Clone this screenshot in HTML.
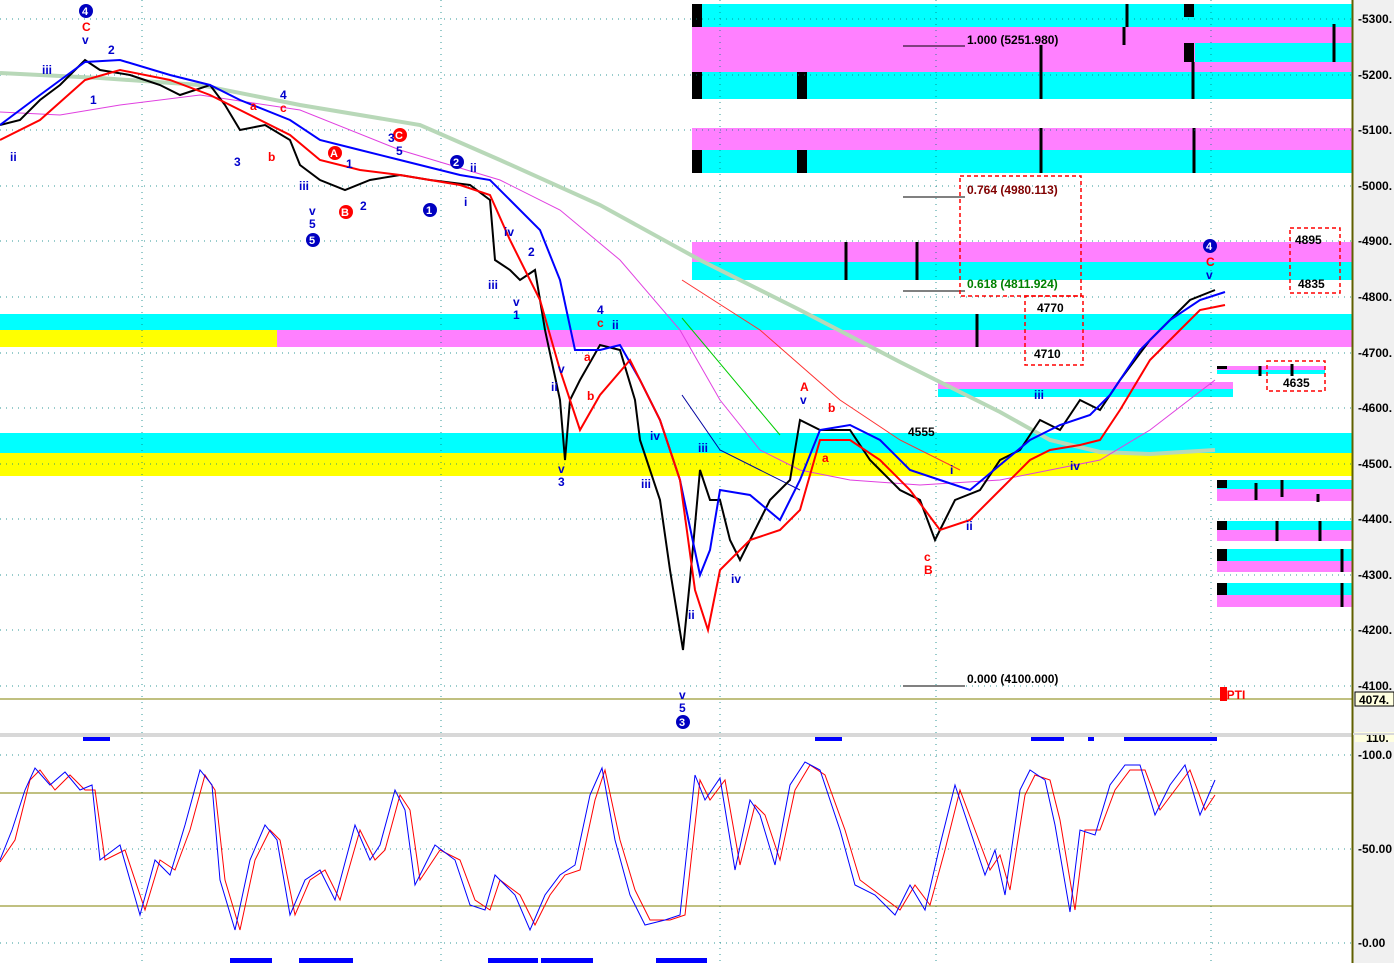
<!DOCTYPE html>
<html><head><meta charset="utf-8"><style>
html,body{margin:0;padding:0;background:#fff;width:1394px;height:963px;overflow:hidden}
svg{display:block}
text{font-family:"Liberation Sans",sans-serif}
</style></head><body>
<svg width="1394" height="963" viewBox="0 0 1394 963" xmlns="http://www.w3.org/2000/svg">
<rect width="1394" height="963" fill="#fff"/>
<!-- bands -->
<g>
<rect x="692" y="4" width="660" height="23" fill="#00ffff"/>
<rect x="692" y="27" width="660" height="45" fill="#ff80ff"/>
<rect x="1195" y="43" width="157" height="19" fill="#00ffff"/>
<rect x="692" y="72" width="660" height="27" fill="#00ffff"/>
<rect x="692" y="128" width="660" height="22" fill="#ff80ff"/>
<rect x="692" y="150" width="660" height="23" fill="#00ffff"/>
<rect x="692" y="242" width="660" height="20" fill="#ff80ff"/>
<rect x="692" y="262" width="660" height="18" fill="#00ffff"/>
<rect x="0" y="314" width="1352" height="16" fill="#00ffff"/>
<rect x="0" y="330" width="1352" height="17" fill="#ff80ff"/>
<rect x="0" y="330" width="277" height="17" fill="#ffff00"/>
<rect x="1217" y="366" width="108" height="4" fill="#ff80ff"/>
<rect x="1217" y="370" width="108" height="4" fill="#00ffff"/>
<rect x="938" y="382" width="295" height="7" fill="#ff80ff"/>
<rect x="938" y="389" width="295" height="8" fill="#00ffff"/>
<rect x="0" y="433" width="1352" height="20" fill="#00ffff"/>
<rect x="0" y="453" width="1352" height="23" fill="#ffff00"/>
<rect x="1217" y="480" width="135" height="9" fill="#00ffff"/>
<rect x="1217" y="489" width="135" height="12" fill="#ff80ff"/>
<rect x="1217" y="521" width="135" height="9" fill="#00ffff"/>
<rect x="1217" y="530" width="135" height="11" fill="#ff80ff"/>
<rect x="1217" y="549" width="135" height="12" fill="#00ffff"/>
<rect x="1217" y="561" width="135" height="11" fill="#ff80ff"/>
<rect x="1217" y="583" width="135" height="12" fill="#00ffff"/>
<rect x="1217" y="595" width="135" height="12" fill="#ff80ff"/>
<g fill="#000">
<rect x="692" y="4" width="10" height="23"/><rect x="692" y="72" width="10" height="27"/><rect x="692" y="150" width="10" height="23"/>
<rect x="797" y="72" width="10" height="27"/><rect x="797" y="150" width="10" height="23"/>
<rect x="1184" y="4" width="10" height="13"/><rect x="1184" y="43" width="10" height="19"/>
<rect x="1217" y="480" width="10" height="8"/><rect x="1217" y="521" width="10" height="9"/><rect x="1217" y="549" width="10" height="12"/><rect x="1217" y="583" width="10" height="12"/>
<rect x="1217" y="366" width="10" height="3"/>
</g>
<g stroke="#000" stroke-width="3">
<line x1="1127" y1="4" x2="1127" y2="27"/><line x1="1124" y1="27" x2="1124" y2="45"/><line x1="1041" y1="45" x2="1041" y2="99"/>
<line x1="1193" y1="62" x2="1193" y2="99"/><line x1="1334" y1="24" x2="1334" y2="62"/><line x1="1041" y1="128" x2="1041" y2="173"/>
<line x1="1194" y1="128" x2="1194" y2="173"/><line x1="846" y1="242" x2="846" y2="280"/><line x1="917" y1="242" x2="917" y2="280"/>
<line x1="977" y1="314" x2="977" y2="347"/><line x1="1260" y1="366" x2="1260" y2="376"/><line x1="1292" y1="364" x2="1292" y2="376"/>
<line x1="1256" y1="483" x2="1256" y2="500"/><line x1="1282" y1="480" x2="1282" y2="497"/><line x1="1318" y1="494" x2="1318" y2="502"/>
<line x1="1277" y1="521" x2="1277" y2="541"/><line x1="1320" y1="521" x2="1320" y2="541"/><line x1="1342" y1="549" x2="1342" y2="572"/><line x1="1342" y1="583" x2="1342" y2="607"/>
</g>
</g>
<!-- grid -->
<g stroke="#008080" stroke-width="1" stroke-dasharray="1,5" opacity="0.8">
<line x1="0" y1="19" x2="1352" y2="19"/><line x1="0" y1="75" x2="1352" y2="75"/><line x1="0" y1="130" x2="1352" y2="130"/>
<line x1="0" y1="186" x2="1352" y2="186"/><line x1="0" y1="241" x2="1352" y2="241"/><line x1="0" y1="297" x2="1352" y2="297"/>
<line x1="0" y1="353" x2="1352" y2="353"/><line x1="0" y1="408" x2="1352" y2="408"/><line x1="0" y1="464" x2="1352" y2="464"/>
<line x1="0" y1="519" x2="1352" y2="519"/><line x1="0" y1="575" x2="1352" y2="575"/><line x1="0" y1="630" x2="1352" y2="630"/>
<line x1="0" y1="686" x2="1352" y2="686"/>
<line x1="0" y1="755" x2="1352" y2="755"/><line x1="0" y1="849" x2="1352" y2="849"/><line x1="0" y1="943" x2="1352" y2="943"/>
<line x1="142" y1="0" x2="142" y2="963"/><line x1="441" y1="0" x2="441" y2="963"/><line x1="720" y1="0" x2="720" y2="963"/><line x1="936" y1="0" x2="936" y2="963"/><line x1="1211" y1="0" x2="1211" y2="963"/>
</g>
<line x1="0" y1="699" x2="1352" y2="699" stroke="#808000"/>
<!-- MAs -->
<polyline fill="none" stroke="#b8d8b8" stroke-width="4" points="0,73 100,78 200,85 300,105 420,125 500,160 600,205 700,260 800,310 900,362 1000,412 1050,440 1100,452 1150,454 1215,450"/>
<polyline fill="none" stroke="#e040e0" stroke-width="1" points="0,112 60,115 120,105 200,95 300,110 400,150 500,180 560,210 620,260 680,330 720,400 760,450 800,470 850,480 920,485 1000,480 1050,470 1100,460 1150,430 1215,380"/>
<polyline fill="none" stroke="#ff3030" stroke-width="1" points="682,280 760,330 840,400 900,440 960,470"/>
<polyline fill="none" stroke="#00cc00" stroke-width="1" points="682,318 780,435"/>
<polyline fill="none" stroke="#0000a0" stroke-width="1" points="682,395 720,450 760,470 800,490"/>
<!-- price -->
<polyline fill="none" stroke="#000" stroke-width="2" points="0,125 20,120 40,100 60,85 85,60 100,70 130,75 160,85 180,95 210,85 225,105 240,130 265,125 290,140 300,165 320,180 345,190 370,180 400,175 430,180 470,185 490,200 495,260 510,270 520,280 535,270 545,330 560,400 565,460 570,400 580,380 600,345 620,350 635,400 640,440 660,500 670,570 683,650 690,580 700,470 710,500 720,500 730,540 740,560 760,520 770,500 790,480 800,420 820,430 850,430 870,460 880,470 900,490 920,500 935,540 955,500 980,490 1000,460 1020,450 1040,420 1060,430 1080,400 1100,410 1120,380 1150,340 1190,300 1215,290"/>
<polyline fill="none" stroke="#0000ff" stroke-width="2" points="0,125 40,95 85,62 120,60 170,75 210,85 240,100 290,120 320,140 360,150 400,160 460,175 490,180 510,200 540,230 560,280 575,350 600,350 620,345 640,380 660,420 680,480 700,575 710,550 720,490 750,495 780,520 800,480 820,430 850,425 880,440 910,470 940,480 970,490 1000,465 1030,440 1060,425 1090,415 1110,395 1140,350 1170,320 1200,300 1225,292"/>
<polyline fill="none" stroke="#ff0000" stroke-width="2" points="0,140 40,120 85,80 120,70 170,80 210,95 240,110 290,135 320,160 360,170 400,175 460,185 490,195 510,240 540,300 560,370 580,430 600,395 630,360 660,420 680,480 695,590 708,630 720,570 750,540 780,530 800,510 820,440 850,440 880,460 910,490 940,530 970,520 1000,490 1030,460 1050,450 1080,445 1100,440 1120,410 1150,360 1180,330 1200,310 1225,305"/>
<!-- fib labels -->
<g font-size="12" font-weight="bold">
<line x1="903" y1="46" x2="965" y2="46" stroke="#000"/><text x="967" y="44" fill="#000">1.000 (5251.980)</text>
<line x1="903" y1="197" x2="965" y2="197" stroke="#000"/><text x="967" y="194" fill="#800000">0.764 (4980.113)</text>
<line x1="903" y1="291" x2="965" y2="291" stroke="#000"/><text x="967" y="288" fill="#008000">0.618 (4811.924)</text>
<line x1="903" y1="686" x2="965" y2="686" stroke="#000"/><text x="967" y="683" fill="#000">0.000 (4100.000)</text>
<text x="1037" y="312" fill="#000">4770</text><text x="1034" y="358" fill="#000">4710</text>
<text x="1295" y="244" fill="#000">4895</text><text x="1298" y="288" fill="#000">4835</text>
<text x="1283" y="387" fill="#000">4635</text><text x="908" y="436" fill="#000">4555</text>
</g>
<g fill="none" stroke="#ff0000" stroke-width="1.5" stroke-dasharray="4,3">
<rect x="960" y="176" width="121" height="120"/><rect x="1025" y="296" width="58" height="69"/>
<rect x="1290" y="228" width="50" height="65"/><rect x="1267" y="361" width="58" height="30"/>
</g>
<!-- wave labels -->
<g font-size="12" font-weight="bold">
<circle cx="86" cy="11" r="7" fill="#0000c0"/><text x="82" y="15" fill="#fff" font-size="11">4</text>
<circle cx="313" cy="240" r="7" fill="#0000c0"/><text x="309" y="244" fill="#fff" font-size="11">5</text>
<circle cx="430" cy="210" r="7" fill="#0000c0"/><text x="426" y="214" fill="#fff" font-size="11">1</text>
<circle cx="457" cy="162" r="7" fill="#0000c0"/><text x="453" y="166" fill="#fff" font-size="11">2</text>
<circle cx="683" cy="722" r="7" fill="#0000c0"/><text x="679" y="726" fill="#fff" font-size="11">3</text>
<circle cx="1210" cy="246" r="7" fill="#0000c0"/><text x="1206" y="250" fill="#fff" font-size="11">4</text>
<circle cx="400" cy="135" r="7" fill="#ff0000"/><text x="395" y="139" fill="#fff" font-size="11">C</text>
<circle cx="335" cy="153" r="7" fill="#ff0000"/><text x="330" y="157" fill="#fff" font-size="11">A</text>
<circle cx="346" cy="212" r="7" fill="#ff0000"/><text x="341" y="216" fill="#fff" font-size="11">B</text>
<text x="82" y="31" fill="#f00">C</text><text x="82" y="44" fill="#00c">v</text>
<text x="1206" y="266" fill="#f00">C</text><text x="1206" y="279" fill="#00c">v</text>
<text x="42" y="74" fill="#00c">iii</text><text x="10" y="161" fill="#00c">ii</text><text x="108" y="54" fill="#00c">2</text><text x="90" y="104" fill="#00c">1</text>
<text x="234" y="166" fill="#00c">3</text><text x="268" y="161" fill="#f00">b</text><text x="250" y="110" fill="#f00">a</text><text x="280" y="99" fill="#00c">4</text><text x="280" y="112" fill="#f00">c</text>
<text x="299" y="190" fill="#00c">iii</text><text x="309" y="215" fill="#00c">v</text><text x="309" y="228" fill="#00c">5</text>
<text x="360" y="210" fill="#00c">2</text><text x="388" y="142" fill="#00c">3</text><text x="396" y="155" fill="#00c">5</text><text x="346" y="168" fill="#00c">1</text>
<text x="470" y="172" fill="#00c">ii</text><text x="464" y="206" fill="#00c">i</text>
<text x="504" y="236" fill="#00c">iv</text><text x="488" y="289" fill="#00c">iii</text><text x="528" y="256" fill="#00c">2</text><text x="513" y="306" fill="#00c">v</text><text x="513" y="319" fill="#00c">1</text>
<text x="558" y="473" fill="#00c">v</text><text x="558" y="486" fill="#00c">3</text><text x="551" y="391" fill="#00c">ii</text><text x="558" y="373" fill="#00c">v</text>
<text x="597" y="314" fill="#00c">4</text><text x="597" y="327" fill="#f00">c</text><text x="612" y="329" fill="#00c">ii</text><text x="584" y="361" fill="#f00">a</text><text x="587" y="400" fill="#f00">b</text>
<text x="650" y="440" fill="#00c">iv</text><text x="641" y="488" fill="#00c">iii</text><text x="698" y="452" fill="#00c">iii</text><text x="688" y="619" fill="#00c">ii</text>
<text x="679" y="699" fill="#00c">v</text><text x="679" y="712" fill="#00c">5</text><text x="731" y="583" fill="#00c">iv</text>
<text x="800" y="391" fill="#f00">A</text><text x="800" y="404" fill="#00c">v</text><text x="828" y="412" fill="#f00">b</text><text x="822" y="462" fill="#f00">a</text>
<text x="924" y="561" fill="#f00">c</text><text x="924" y="574" fill="#f00">B</text><text x="966" y="530" fill="#00c">ii</text><text x="950" y="474" fill="#00c">i</text>
<text x="1034" y="399" fill="#00c">iii</text><text x="1070" y="470" fill="#00c">iv</text>
<rect x="1220" y="687" width="7" height="14" fill="#f00"/><text x="1220" y="699" fill="#f00">5PTI</text>
</g>
<!-- separator -->
<rect x="0" y="733" width="1352" height="4" fill="#d8d8d8"/>
<g fill="#0000ff">
<rect x="83" y="737" width="27" height="4"/><rect x="815" y="737" width="27" height="4"/><rect x="1031" y="737" width="33" height="4"/><rect x="1088" y="737" width="6" height="4"/><rect x="1124" y="737" width="93" height="4"/>
<rect x="230" y="958" width="42" height="5"/><rect x="299" y="958" width="54" height="5"/><rect x="488" y="958" width="50" height="5"/><rect x="541" y="958" width="52" height="5"/><rect x="656" y="958" width="51" height="5"/>
</g>
<line x1="0" y1="793" x2="1352" y2="793" stroke="#808000"/><line x1="0" y1="906" x2="1352" y2="906" stroke="#808000"/>
<!-- oscillator -->
<polyline fill="none" stroke="#ff0000" stroke-width="1" points="0,862 15,840 30,780 40,770 55,790 70,775 85,790 95,790 105,860 125,850 145,910 160,860 175,870 190,830 205,775 215,790 225,880 240,930 255,860 270,830 280,840 295,915 310,880 325,870 340,900 360,830 375,860 385,850 400,795 410,810 420,880 440,850 460,860 475,900 490,910 500,880 520,895 535,925 550,895 565,875 580,870 595,800 605,770 620,840 635,890 650,920 670,920 685,915 700,780 710,800 725,780 740,865 755,805 765,815 780,860 795,790 810,765 825,775 845,830 860,880 880,895 900,910 915,885 930,905 945,850 960,790 975,830 990,870 1000,855 1010,890 1025,795 1035,775 1050,780 1060,820 1075,910 1085,830 1100,830 1115,790 1130,770 1145,770 1160,810 1175,790 1190,770 1205,810 1215,795"/>
<polyline fill="none" stroke="#0000ff" stroke-width="1" points="0,860 12,830 25,790 35,768 50,785 65,772 80,790 92,785 100,860 120,845 140,915 155,860 170,875 185,825 200,770 212,785 220,880 235,930 250,860 265,825 277,840 290,915 305,880 320,870 335,900 355,825 370,860 380,845 395,790 405,810 415,885 435,845 455,860 470,905 485,910 495,875 515,895 530,930 545,895 560,875 575,865 590,795 602,768 615,840 630,895 645,925 665,920 680,915 695,775 705,800 720,778 735,870 750,800 760,815 775,865 790,785 805,762 820,770 840,830 855,885 875,895 895,915 910,885 925,910 940,845 955,785 970,830 985,875 995,850 1005,895 1020,790 1030,770 1045,780 1055,825 1070,912 1080,830 1095,835 1110,785 1125,765 1140,765 1155,815 1170,785 1185,765 1200,815 1215,780"/>
<!-- axis -->
<rect x="1352" y="0" width="42" height="963" fill="#f0f0f0"/>
<line x1="1352.5" y1="0" x2="1352.5" y2="963" stroke="#606000" stroke-width="2"/>
<g font-size="12" font-weight="bold" fill="#000">
<text x="1358" y="23">-5300.</text><text x="1358" y="79">-5200.</text><text x="1358" y="134">-5100.</text><text x="1358" y="190">-5000.</text>
<text x="1358" y="245">-4900.</text><text x="1358" y="301">-4800.</text><text x="1358" y="357">-4700.</text><text x="1358" y="412">-4600.</text>
<text x="1358" y="468">-4500.</text><text x="1358" y="523">-4400.</text><text x="1358" y="579">-4300.</text><text x="1358" y="634">-4200.</text>
<text x="1358" y="690">-4100.</text>
<rect x="1355" y="692" width="39" height="14" fill="#ffffe0" stroke="#000"/><text x="1359" y="704">4074.</text>
<rect x="1355" y="732" width="39" height="10" fill="#ffffe0"/><text x="1366" y="742">110.</text>
<text x="1358" y="759">-100.0</text><text x="1358" y="853">-50.00</text><text x="1358" y="947">-0.00</text>
</g>
<rect x="1353" y="733" width="41" height="2" fill="#d8d8d8"/>
</svg>
</body></html>
